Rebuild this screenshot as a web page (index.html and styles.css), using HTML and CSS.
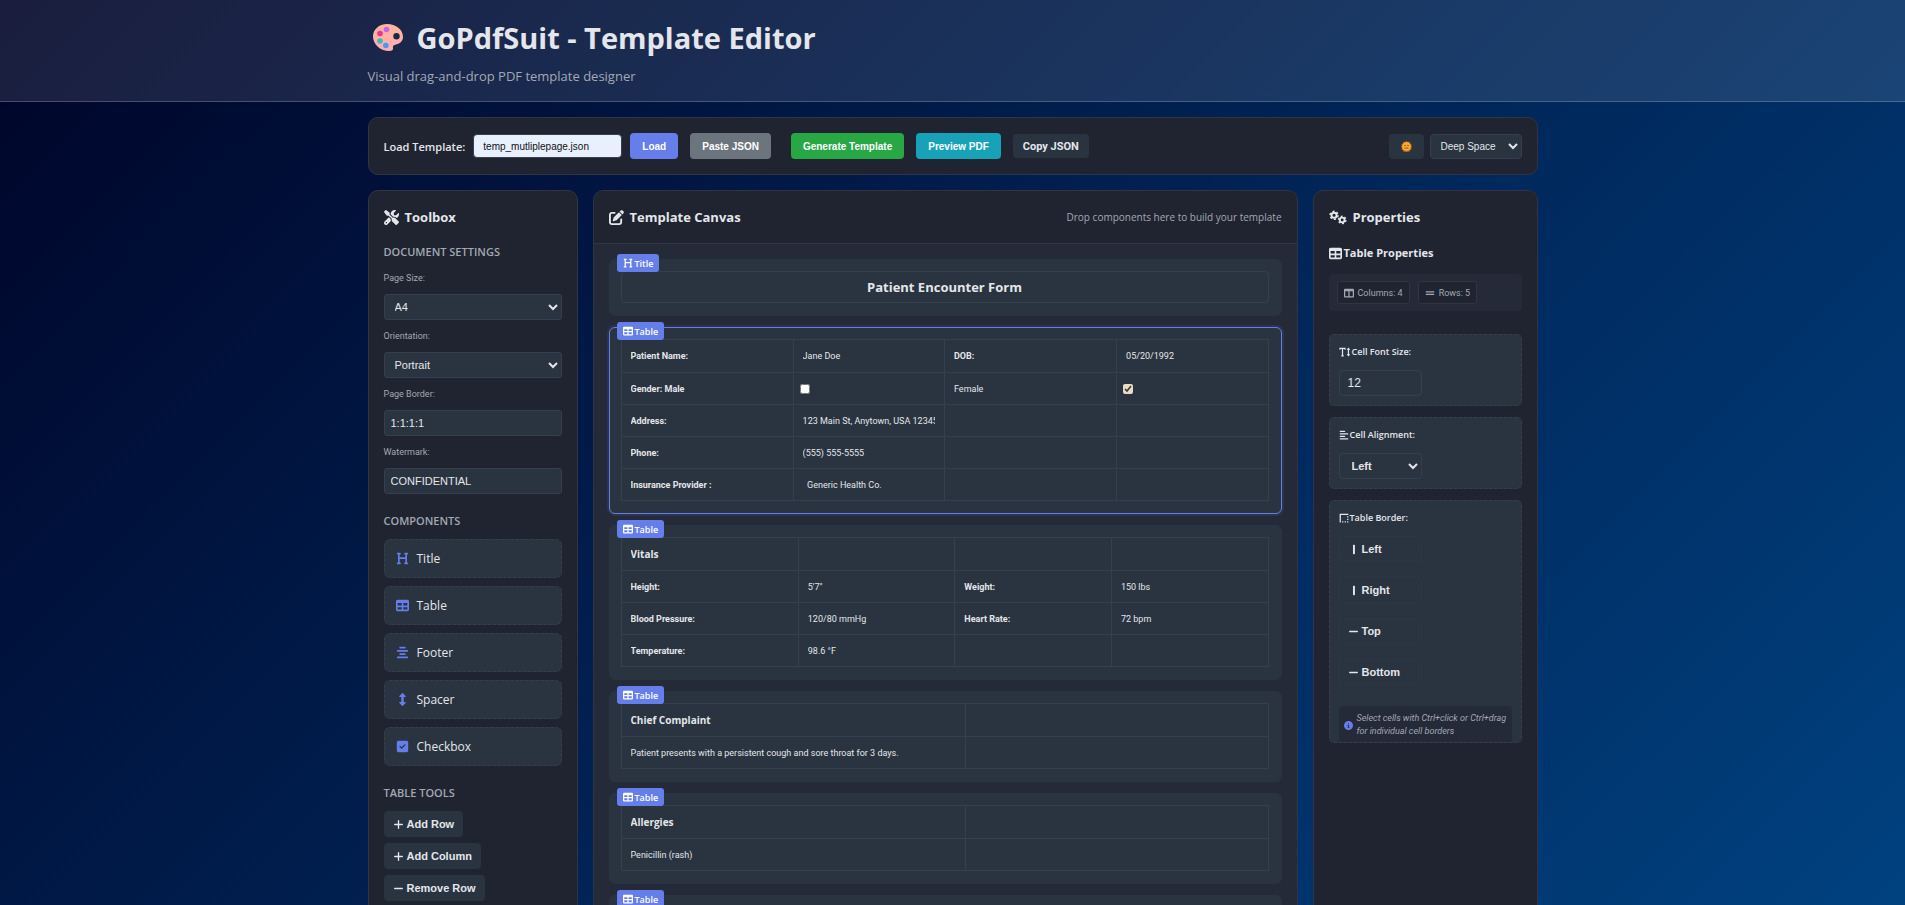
FILE: index.html
```html
<!DOCTYPE html>
<html lang="en">
<head>
<meta charset="utf-8">
<meta name="viewport" content="width=device-width, initial-scale=1">
<title>GoPdfSuit - Template Editor</title>
<link rel="stylesheet" href="styles.css">
</head>
<body>
<svg class="sprite" aria-hidden="true">
  <symbol id="i-table" viewBox="0 0 512 512"><path d="M64 256V160H224v96H64zm0 64H224v96H64V320zm224 96V320H448v96H288zM448 256H288V160H448v96zM64 32C28.700 32 0 60.700 0 96V416c0 35.300 28.700 64 64 64H448c35.300 0 64-28.700 64-64V96c0-35.300-28.700-64-64-64H64z"/></symbol>
  <symbol id="i-heading" viewBox="0 0 448 512"><path d="M0 64C0 46.300 14.300 32 32 32H80h48c17.700 0 32 14.300 32 32s-14.300 32-32 32H112V208H336V96H320c-17.700 0-32-14.300-32-32s14.300-32 32-32h48 48c17.700 0 32 14.300 32 32s-14.300 32-32 32H400V240 416h16c17.700 0 32 14.300 32 32s-14.300 32-32 32H368 320c-17.700 0-32-14.300-32-32s14.300-32 32-32h16V272H112V416h16c17.700 0 32 14.300 32 32s-14.300 32-32 32H80 32c-17.700 0-32-14.300-32-32s14.300-32 32-32H48V240 96H32C14.300 96 0 81.700 0 64z"/></symbol>
  <symbol id="i-center" viewBox="0 0 448 512"><path d="M352 64c0-17.700-14.300-32-32-32H128c-17.700 0-32 14.300-32 32s14.300 32 32 32H320c17.700 0 32-14.300 32-32zm96 128c0-17.700-14.300-32-32-32H32c-17.700 0-32 14.300-32 32s14.300 32 32 32H416c17.700 0 32-14.300 32-32zM0 448c0 17.700 14.300 32 32 32H416c17.700 0 32-14.300 32-32s-14.300-32-32-32H32c-17.700 0-32 14.300-32 32zM352 320c0-17.700-14.300-32-32-32H128c-17.700 0-32 14.300-32 32s14.300 32 32 32H320c17.700 0 32-14.300 32-32z"/></symbol>
  <symbol id="i-left" viewBox="0 0 448 512"><path d="M288 64c0 17.700-14.300 32-32 32H32C14.300 96 0 81.700 0 64S14.300 32 32 32H256c17.700 0 32 14.300 32 32zm0 256c0 17.700-14.300 32-32 32H32c-17.700 0-32-14.300-32-32s14.300-32 32-32H256c17.700 0 32 14.300 32 32zM0 192c0-17.700 14.300-32 32-32H416c17.700 0 32 14.300 32 32s-14.300 32-32 32H32c-17.700 0-32-14.300-32-32zM448 448c0 17.700-14.300 32-32 32H32c-17.700 0-32-14.300-32-32s14.300-32 32-32H416c17.700 0 32 14.300 32 32z"/></symbol>
  <symbol id="i-updown" viewBox="0 0 256 512"><path d="M145.600 7.700C141 2.800 134.700 0 128 0s-13 2.800-17.600 7.700l-104 112c-6.500 7-8.200 17.200-4.400 25.900S14.500 160 24 160H80V352H24c-9.500 0-18.200 5.700-22 14.400s-2.100 18.900 4.400 25.900l104 112c4.500 4.900 10.900 7.700 17.600 7.700s13-2.800 17.600-7.700l104-112c6.500-7 8.200-17.200 4.400-25.900s-12.500-14.400-22-14.400H176V160h56c9.500 0 18.200-5.700 22-14.400s2.100-18.900-4.400-25.900l-104-112z"/></symbol>
  <symbol id="i-check" viewBox="0 0 448 512"><path d="M64 32C28.700 32 0 60.700 0 96V416c0 35.300 28.700 64 64 64H384c35.300 0 64-28.700 64-64V96c0-35.300-28.700-64-64-64H64zM337 209L209 337c-9.400 9.400-24.600 9.400-33.900 0l-64-64c-9.400-9.400-9.400-24.600 0-33.900s24.600-9.400 33.900 0l47 47L303 175c9.400-9.400 24.600-9.400 33.900 0s9.400 24.600 0 33.900z"/></symbol>
  <symbol id="i-plus" viewBox="0 0 448 512"><path d="M256 80c0-17.700-14.300-32-32-32s-32 14.300-32 32V224H48c-17.700 0-32 14.300-32 32s14.300 32 32 32H192V432c0 17.700 14.300 32 32 32s32-14.300 32-32V288H400c17.700 0 32-14.300 32-32s-14.300-32-32-32H256V80z"/></symbol>
  <symbol id="i-minus" viewBox="0 0 448 512"><path d="M432 256c0 17.700-14.300 32-32 32H48c-17.700 0-32-14.300-32-32s14.300-32 32-32H400c17.700 0 32 14.300 32 32z"/></symbol>
  <symbol id="i-bar" viewBox="0 0 448 512"><rect x="200" y="40" width="90" height="432" rx="30"/></symbol>
  <symbol id="i-lines" viewBox="0 0 448 512"><path d="M32 160H416a32 32 0 0 1 0 64H32a32 32 0 0 1 0-64zM32 288H416a32 32 0 0 1 0 64H32a32 32 0 0 1 0-64z"/></symbol>
  <symbol id="i-columns" viewBox="0 0 512 512"><path d="M0 96C0 60.700 28.700 32 64 32H448c35.300 0 64 28.700 64 64V416c0 35.300-28.700 64-64 64H64c-35.300 0-64-28.700-64-64V96zm64 64V416H224V160H64zm384 0H288V416H448V160z"/></symbol>
  <symbol id="i-edit" viewBox="0 0 512 512"><path d="M471.600 21.700c-21.900-21.900-57.300-21.900-79.200 0L362.300 51.700l97.900 97.900 30.100-30.100c21.900-21.900 21.900-57.300 0-79.200L471.600 21.700zm-299.200 220c-6.100 6.100-10.800 13.600-13.500 21.900l-29.600 88.800c-2.900 8.600-.6 18.100 5.800 24.600s15.900 8.700 24.600 5.800l88.800-29.600c8.200-2.700 15.700-7.400 21.900-13.500L437.700 172.300 339.700 74.300 172.400 241.700zM96 64C43 64 0 107 0 160V416c0 53 43 96 96 96H352c53 0 96-43 96-96V320c0-17.700-14.300-32-32-32s-32 14.300-32 32v96c0 17.700-14.300 32-32 32H96c-17.700 0-32-14.300-32-32V160c0-17.700 14.300-32 32-32h96c17.700 0 32-14.300 32-32s-14.300-32-32-32H96z"/></symbol>
  <symbol id="i-tools" viewBox="0 0 512 512"><path d="M78.600 5C69.100-2.400 55.600-1.500 47 7L7 47c-8.500 8.500-9.400 22-2.100 31.600l80 104c4.500 5.900 11.600 9.400 19 9.400h54.100l109 109c-14.700 29-10 65.400 14.300 89.600l112 112c12.500 12.500 32.800 12.500 45.300 0l64-64c12.500-12.500 12.500-32.800 0-45.300l-112-112c-24.200-24.200-60.600-29-89.600-14.300l-109-109V104c0-7.500-3.500-14.500-9.400-19L78.600 5zM19.900 396.100C7.200 408.800 0 426.100 0 444.100C0 481.600 30.400 512 67.900 512c18 0 35.300-7.200 48-19.900L233.700 374.300c-7.800-20.900-9-43.600-3.600-65.100l-61.700-61.700L19.900 396.100zM512 144c0-10.500-1.100-20.700-3.200-30.500c-2.400-11.200-16.100-14.100-24.200-6l-63.900 63.900c-3 3-7.100 4.700-11.300 4.700H352c-8.800 0-16-7.200-16-16V102.600c0-4.200 1.700-8.300 4.700-11.300l63.900-63.900c8.100-8.100 5.200-21.800-6-24.200C388.700 1.100 378.500 0 368 0C288.500 0 224 64.500 224 144l0 .8 85.300 85.300c36-9.100 75.800 .5 104 28.700L429 274.500c49-23 83-72.800 83-130.500zM56 432a24 24 0 1 1 48 0 24 24 0 1 1 -48 0z"/></symbol>
  <symbol id="i-gears" viewBox="0 0 640 512"><g fill="none" stroke="currentColor"><circle cx="180" cy="176" r="92" stroke-width="70"/><circle cx="180" cy="176" r="142" stroke-width="50" stroke-dasharray="74 74.700"/><circle cx="468" cy="344" r="84" stroke-width="66"/><circle cx="468" cy="344" r="132" stroke-width="48" stroke-dasharray="69 69.200"/></g></symbol>
  <symbol id="i-height" viewBox="0 0 576 512"><path d="M0 32H320V144H260V96H192V416H224V480H96V416H128V96H60V144H0zM464 24L560 136H496V376H560L464 488L368 376H432V136H368z"/></symbol>
  <symbol id="i-border" viewBox="0 0 448 512"><path d="M0 32H448V96H64V480H0zM384 160h64v64h-64zM384 288h64v64h-64zM384 416h64v64h-64zM256 416h64v64h-64zM128 416h64v64h-64z"/></symbol>
  <symbol id="i-info" viewBox="0 0 512 512"><path d="M256 512A256 256 0 1 0 256 0a256 256 0 1 0 0 512zM216 336h24V272H216c-13.300 0-24-10.700-24-24s10.700-24 24-24h48c13.300 0 24 10.700 24 24v88h8c13.300 0 24 10.700 24 24s-10.700 24-24 24H216c-13.300 0-24-10.700-24-24s10.700-24 24-24zm40-208a32 32 0 1 1 0 64 32 32 0 1 1 0-64z"/></symbol>
</svg>

<header class="masthead">
  <div class="wrap">
    <h1 class="brand">
      <svg class="palette" viewBox="0 0 32 32" aria-hidden="true">
        <defs><linearGradient id="skin" x1="0" y1="0" x2="0" y2="1"><stop offset="0" stop-color="#ffb59a"/><stop offset="1" stop-color="#ffaeb4"/></linearGradient></defs>
        <path fill="url(#skin)" fill-rule="evenodd" d="M15 2C7 2 1 7.500 1 14.500C1 23 9 29 17 29C20 29 21.500 28 21 26C20.400 24 21.500 23 24 22.500C28.500 21.800 31 18.500 31 15C31 7.500 24 2 15 2zM24.500 11a3.200 3.200 0 1 1 0 6.400a3.200 3.200 0 1 1 0-6.400z"/>
        <circle cx="14.500" cy="7.500" r="2.800" fill="#c763f0"/><circle cx="8" cy="11.500" r="2.800" fill="#f4328c"/><circle cx="8" cy="19" r="2.800" fill="#36bdb4"/><circle cx="13.800" cy="23.500" r="2.800" fill="#4a95f8"/>
      </svg>
      <span>GoPdfSuit - Template Editor</span>
    </h1>
    <p class="tagline">Visual drag-and-drop PDF template designer</p>
  </div>
</header>

<main class="wrap page">
  <section class="panel toolbar" aria-label="Template actions">
    <label class="load-label" for="file">Load Template:</label>
    <input class="load-input" id="file" type="text" value="temp_mutliplepage.json">
    <button class="btn btn-load" type="button">Load</button>
    <button class="btn btn-paste" type="button">Paste JSON</button>
    <button class="btn btn-generate" type="button">Generate Template</button>
    <button class="btn btn-preview" type="button">Preview PDF</button>
    <button class="btn-copy" type="button">Copy JSON</button>
    <div class="theme">
      <button class="btn-theme" type="button" aria-label="Toggle theme">
        <svg class="face" viewBox="0 0 22 22" aria-hidden="true"><path fill="#d9701f" d="M11 0l2.500 2.200 3.300-.6 1 3.200 3.100 1.300-.7 3.300L22 11l-1.800 2.600.7 3.300-3.100 1.300-1 3.200-3.300-.6L11 22l-2.500-1.200-3.300.6-1-3.200-3.100-1.300.7-3.300L0 11l1.800-1.600-.7-3.300 3.100-1.300 1-3.200 3.300.6z"/><circle cx="11" cy="11" r="8.500" fill="#f5b02e"/><circle cx="8" cy="9" r="1.400" fill="#7a4310"/><circle cx="14" cy="9" r="1.400" fill="#7a4310"/><path d="M7 14h8" fill="none" stroke="#7a4310" stroke-width="1.600"/></svg>
      </button>
      <select class="theme-select" aria-label="Theme"><option>Deep Space</option></select>
    </div>
  </section>

  <div class="workspace">
    <aside class="panel side">
      <h2 class="heading"><svg class="ico-lg"><use href="#i-tools"/></svg>Toolbox</h2>
      <h3 class="group">Document Settings</h3>
      <label class="field-label" for="size">Page Size:</label>
      <select class="field" id="size"><option>A4</option></select>
      <label class="field-label" for="orient">Orientation:</label>
      <select class="field" id="orient"><option>Portrait</option></select>
      <label class="field-label" for="border">Page Border:</label>
      <input class="field" id="border" type="text" value="1:1:1:1">
      <label class="field-label" for="mark">Watermark:</label>
      <input class="field" id="mark" type="text" value="CONFIDENTIAL">
      <h3 class="group group-gap">Components</h3>
      <ul class="parts">
        <li class="part" draggable="true"><svg class="ico"><use href="#i-heading"/></svg>Title</li>
        <li class="part" draggable="true"><svg class="ico"><use href="#i-table"/></svg>Table</li>
        <li class="part" draggable="true"><svg class="ico"><use href="#i-center"/></svg>Footer</li>
        <li class="part" draggable="true"><svg class="ico"><use href="#i-updown"/></svg>Spacer</li>
        <li class="part" draggable="true"><svg class="ico"><use href="#i-check"/></svg>Checkbox</li>
      </ul>
      <h3 class="group group-gap">Table Tools</h3>
      <div class="tools">
        <button class="tool" type="button"><svg class="ico-sm"><use href="#i-plus"/></svg>Add Row</button>
        <button class="tool" type="button"><svg class="ico-sm"><use href="#i-plus"/></svg>Add Column</button>
        <button class="tool" type="button"><svg class="ico-sm"><use href="#i-minus"/></svg>Remove Row</button>
      </div>
    </aside>

    <section class="panel canvas">
      <div class="canvas-head">
        <h2 class="heading"><svg class="ico-lg"><use href="#i-edit"/></svg>Template Canvas</h2>
        <p class="hint">Drop components here to build your template</p>
      </div>
      <div class="canvas-body">
        <article class="card">
          <span class="badge"><svg class="ico-xs"><use href="#i-heading"/></svg>Title</span>
          <input class="doc-title" type="text" aria-label="Document title" value="Patient Encounter Form">
        </article>

        <article class="card card-active">
          <span class="badge"><svg class="ico-xs"><use href="#i-table"/></svg>Table</span>
          <table class="grid">
            <colgroup><col class="w-label"><col class="w-value"><col class="w-label"><col class="w-value"></colgroup>
            <tr><td><input class="cell strong" aria-label="Cell" value="Patient Name:"></td><td><input class="cell" aria-label="Cell" value="Jane Doe"></td><td><input class="cell strong" aria-label="Cell" value="DOB:"></td><td><input class="cell" aria-label="Cell" value="05/20/1992"></td></tr>
            <tr><td><input class="cell strong" aria-label="Cell" value="Gender: Male"></td><td><input class="tick" type="checkbox" aria-label="Male"></td><td><input class="cell" aria-label="Cell" value="Female"></td><td><input class="tick" type="checkbox" aria-label="Female" checked></td></tr>
            <tr><td><input class="cell strong" aria-label="Cell" value="Address:"></td><td><input class="cell" aria-label="Cell" value="123 Main St, Anytown, USA 12345"></td><td></td><td></td></tr>
            <tr><td><input class="cell strong" aria-label="Cell" value="Phone:"></td><td><input class="cell" aria-label="Cell" value="(555) 555-5555"></td><td></td><td></td></tr>
            <tr><td><input class="cell strong" aria-label="Cell" value="Insurance Provider :"></td><td><input class="cell" aria-label="Cell" value="  Generic Health Co."></td><td></td><td></td></tr>
          </table>
        </article>

        <article class="card">
          <span class="badge"><svg class="ico-xs"><use href="#i-table"/></svg>Table</span>
          <table class="grid">
            <colgroup><col class="w-vital"><col><col><col></colgroup>
            <tr><td><input class="cell title" aria-label="Cell" value="Vitals"></td><td></td><td></td><td></td></tr>
            <tr><td><input class="cell strong" aria-label="Cell" value="Height:"></td><td><input class="cell" aria-label="Cell" value="5'7&quot;"></td><td><input class="cell strong" aria-label="Cell" value="Weight:"></td><td><input class="cell" aria-label="Cell" value="150 lbs"></td></tr>
            <tr><td><input class="cell strong" aria-label="Cell" value="Blood Pressure:"></td><td><input class="cell" aria-label="Cell" value="120/80 mmHg"></td><td><input class="cell strong" aria-label="Cell" value="Heart Rate:"></td><td><input class="cell" aria-label="Cell" value="72 bpm"></td></tr>
            <tr><td><input class="cell strong" aria-label="Cell" value="Temperature:"></td><td><input class="cell" aria-label="Cell" value="98.6 °F"></td><td></td><td></td></tr>
          </table>
        </article>

        <article class="card">
          <span class="badge"><svg class="ico-xs"><use href="#i-table"/></svg>Table</span>
          <table class="grid">
            <colgroup><col class="w-wide"><col></colgroup>
            <tr><td><input class="cell title" aria-label="Cell" value="Chief Complaint"></td><td></td></tr>
            <tr><td><input class="cell" aria-label="Cell" value="Patient presents with a persistent cough and sore throat for 3 days."></td><td></td></tr>
          </table>
        </article>

        <article class="card">
          <span class="badge"><svg class="ico-xs"><use href="#i-table"/></svg>Table</span>
          <table class="grid">
            <colgroup><col class="w-wide"><col></colgroup>
            <tr><td><input class="cell title" aria-label="Cell" value="Allergies"></td><td></td></tr>
            <tr><td><input class="cell" aria-label="Cell" value="Penicillin (rash)"></td><td></td></tr>
          </table>
        </article>

        <article class="card">
          <span class="badge"><svg class="ico-xs"><use href="#i-table"/></svg>Table</span>
          <table class="grid"><tr><td></td><td></td></tr></table>
        </article>
      </div>
    </section>

    <aside class="panel side">
      <h2 class="heading"><svg class="ico-gears"><use href="#i-gears"/></svg>Properties</h2>
      <h3 class="subhead"><svg class="ico"><use href="#i-table"/></svg>Table Properties</h3>
      <div class="stats">
        <span class="stat"><svg class="ico-xs"><use href="#i-columns"/></svg>Columns: 4</span>
        <span class="stat"><svg class="ico-xs"><use href="#i-lines"/></svg>Rows: 5</span>
      </div>
      <div class="props">
        <div class="prop">
          <label class="prop-label" for="fs"><svg class="ico-height"><use href="#i-height"/></svg>Cell Font Size:</label>
          <input class="prop-field" id="fs" type="text" value="12">
        </div>
        <div class="prop">
          <label class="prop-label" for="al"><svg class="ico-xs"><use href="#i-left"/></svg>Cell Alignment:</label>
          <select class="prop-field" id="al"><option>Left</option></select>
        </div>
        <div class="prop prop-last">
          <span class="prop-label"><svg class="ico-xs"><use href="#i-border"/></svg>Table Border:</span>
          <div class="edges">
            <button class="edge" type="button"><svg class="ico-sm"><use href="#i-bar"/></svg>Left</button>
            <button class="edge" type="button"><svg class="ico-sm"><use href="#i-bar"/></svg>Right</button>
            <button class="edge" type="button"><svg class="ico-sm"><use href="#i-minus"/></svg>Top</button>
            <button class="edge" type="button"><svg class="ico-sm"><use href="#i-minus"/></svg>Bottom</button>
          </div>
          <p class="note"><svg class="ico-note"><use href="#i-info"/></svg><span>Select cells with Ctrl+click or Ctrl+drag for individual cell borders</span></p>
        </div>
      </div>
    </aside>
  </div>
</main>
</body>
</html>
```

FILE: styles.css
```css
:root {
  --panel: #1f2430;
  --body: #242a38;
  --item: #2a3440;
  --line: #373f4e;
  --edge: #2f3541;
  --text: #e4e6eb;
  --muted: #a3a8b3;
  --accent: #667eea;
  --sans: "Open Sans", "Noto Sans", sans-serif;
  --small: Roboto, "Open Sans", sans-serif;
  --ui: "Liberation Sans", Arial, sans-serif;
}

* { box-sizing: border-box; }

html, body { height: 100%; }

body {
  margin: 0;
  overflow: hidden;
  display: flex;
  flex-direction: column;
  font-family: var(--sans);
  color: var(--text);
  background: linear-gradient(135deg, #000428 0%, #004e92 100%) 0 0 / 100% 165vh no-repeat;
}

h1, h2, h3, p, ul { margin: 0; padding: 0; }
ul { list-style: none; }
svg { fill: currentColor; flex: none; }
button, input, select { font-family: var(--ui); color: inherit; margin: 0; }

.sprite { display: none; }
.ico { width: 13px; height: 13px; }
.ico-lg { width: 15px; height: 15px; }
.ico-gears { width: 18px; height: 15px; }
.ico-sm { width: 11px; height: 11px; }
.ico-xs { width: 10px; height: 10px; }
.ico-height { width: 12px; height: 10px; }
.ico-note { width: 9px; height: 9px; color: var(--accent); }

.wrap {
  width: 100%;
  max-width: 1170px;
  margin: 0 auto;
}

.masthead {
  flex: none;
  padding: 16px 0 15px;
  background: rgba(255, 255, 255, 0.1);
  border-bottom: 1px solid rgba(255, 255, 255, 0.2);
}
.brand {
  display: flex;
  align-items: center;
  gap: 13px;
  padding-left: 4px;
  font-size: 29px;
  line-height: 44px;
  font-weight: 700;
}
.palette { width: 32px; height: 32px; }
.tagline {
  padding-top: 6px;
  font-size: 13px;
  line-height: 20px;
  color: var(--muted);
}

.page {
  flex: 1;
  min-height: 0;
  display: flex;
  flex-direction: column;
  gap: 15px;
  padding-top: 15px;
}
.panel {
  background: var(--panel);
  border: 1px solid var(--edge);
  border-radius: 10px;
}

.toolbar {
  flex: none;
  display: flex;
  align-items: center;
  padding: 15px;
}
.load-label { font-size: 11px; font-weight: 600; margin-right: 8px; }
.load-input {
  width: 149px;
  height: 24px;
  margin-right: 8px;
  padding: 0 9px;
  font-size: 10px;
  color: #111;
  background: #e8f0fe;
  border: 1px solid var(--line);
  border-radius: 4px;
}
.btn {
  height: 26px;
  padding: 0 12px;
  font-size: 10px;
  font-weight: 700;
  color: #fff;
  border: 0;
  border-radius: 4px;
}
.btn-load { background: var(--accent); margin-right: 12px; }
.btn-paste { background: #6c757d; margin-right: 20px; }
.btn-generate { background: #28a745; margin-right: 12px; }
.btn-preview { background: #17a2b8; margin-right: 12px; }
.btn-copy, .btn-theme {
  height: 24px;
  padding: 0 10px;
  font-family: var(--small);
  font-size: 11px;
  font-weight: 700;
  background: var(--item);
  border: 0;
  border-radius: 4px;
}
.theme { margin-left: auto; display: flex; gap: 6px; }
.btn-theme { width: 35px; height: 25px; display: flex; align-items: center; justify-content: center; }
.face { width: 11px; height: 11px; }
.theme-select {
  width: 92px;
  height: 25px;
  padding: 0 0 0 6px;
  font-size: 10px;
  background: var(--item);
  border: 1px solid var(--line);
  border-radius: 4px;
}

.workspace {
  flex: 1;
  min-height: 0;
  display: grid;
  grid-template-columns: 210px minmax(0, 1fr) 225px;
  gap: 15px;
  margin-bottom: -12px;
}
.side { padding: 15px; overflow: hidden; }
.heading {
  display: flex;
  align-items: center;
  gap: 6px;
  font-size: 13px;
  line-height: 22px;
  font-weight: 700;
}
.group {
  margin-top: 13px;
  font-size: 11px;
  line-height: 21px;
  font-weight: 600;
  text-transform: uppercase;
  color: var(--muted);
}
.group-gap { margin-top: 16px; }
.field-label {
  display: block;
  margin-top: 8px;
  font-family: var(--small);
  font-size: 9px;
  line-height: 16px;
  color: var(--muted);
}
.field {
  display: block;
  width: 100%;
  height: 26px;
  margin-top: 8px;
  padding: 0 6px;
  font-size: 11px;
  background: var(--item);
  border: 1px solid var(--line);
  border-radius: 3px;
}
.parts { display: grid; gap: 8px; margin-top: 8px; }
.part {
  display: flex;
  align-items: center;
  gap: 8px;
  height: 39px;
  padding: 0 11px;
  font-size: 12px;
  background: var(--item);
  border: 1px dashed var(--line);
  border-radius: 6px;
}
.part .ico { color: var(--accent); }
.tools {
  display: flex;
  flex-direction: column;
  align-items: flex-start;
  gap: 6px;
  margin-top: 8px;
}
.tool {
  display: flex;
  align-items: center;
  gap: 3px;
  height: 26px;
  padding: 0 9px;
  font-size: 11px;
  font-weight: 700;
  background: var(--item);
  border: 0;
  border-radius: 4px;
}

.canvas {
  display: flex;
  flex-direction: column;
  min-height: 0;
  overflow: hidden;
  background: var(--body);
}
.canvas-head {
  flex: none;
  display: flex;
  align-items: center;
  justify-content: space-between;
  padding: 15px;
  background: var(--panel);
  border-bottom: 1px solid var(--edge);
}
.hint { font-size: 10px; color: var(--muted); }
.canvas-body {
  flex: 1;
  min-height: 0;
  overflow: hidden;
  display: flex;
  flex-direction: column;
  gap: 11px;
  padding: 15px;
}
.card {
  flex: none;
  position: relative;
  padding: 11px 12px 12px 11px;
  background: var(--item);
  border: 1px solid var(--item);
  border-radius: 6px;
}
.card-active {
  border-color: var(--accent);
  box-shadow: 0 0 0 2px rgba(102, 126, 234, 0.12);
}
.badge {
  position: absolute;
  top: -6px;
  left: 7px;
  display: flex;
  align-items: center;
  gap: 2px;
  height: 18px;
  padding: 0 6px;
  font-size: 9px;
  font-weight: 600;
  color: #fff;
  background: var(--accent);
  border-radius: 3px;
}
.doc-title {
  display: block;
  width: 100%;
  height: 32px;
  font-family: var(--sans);
  font-size: 13px;
  font-weight: 700;
  text-align: center;
  background: transparent;
  border: 1px solid var(--line);
  border-radius: 4px;
}
.grid {
  width: 100%;
  table-layout: fixed;
  border-collapse: collapse;
}
.grid td {
  height: 32px;
  padding: 0 3px;
  border: 1px solid var(--line);
}
.grid tr:first-child td { height: 33px; }
.w-label { width: 26.6%; }
.w-value { width: 23.4%; }
.w-vital { width: 27.4%; }
.w-wide { width: 53.2%; }
.cell {
  display: block;
  width: 100%;
  height: 24px;
  padding: 0 6px;
  font-family: var(--small);
  font-size: 9px;
  background: transparent;
  border: 0;
}
.strong { font-weight: 700; }
.title { font-family: var(--sans); font-size: 10px; font-weight: 700; }
.tick {
  display: block;
  width: 10px;
  height: 10px;
  margin-left: 3px;
  accent-color: #e8dcc4;
}

.subhead {
  display: flex;
  align-items: center;
  gap: 2px;
  margin-top: 15px;
  font-size: 11px;
  line-height: 20px;
  font-weight: 700;
}
.stats {
  display: flex;
  gap: 8px;
  margin-top: 11px;
  padding: 7px 8px;
  background: var(--body);
  border-radius: 4px;
}
.stat {
  display: flex;
  align-items: center;
  gap: 4px;
  height: 23px;
  padding: 0 6px;
  font-family: var(--small);
  font-size: 9px;
  color: var(--muted);
  background: var(--panel);
  border: 1px solid var(--edge);
  border-radius: 3px;
}
.props { display: grid; gap: 11px; margin-top: 23px; }
.prop {
  padding: 9px;
  background: var(--item);
  border: 1px dashed var(--line);
  border-radius: 5px;
}
.prop-label {
  display: flex;
  align-items: center;
  gap: 1px;
  font-size: 9px;
  line-height: 16px;
  font-weight: 600;
}
.prop-field {
  display: block;
  width: 83px;
  height: 26px;
  margin-top: 10px;
  padding: 0 8px;
  font-size: 12px;
  background: var(--item);
  border: 1px solid var(--line);
  border-radius: 4px;
}
select.prop-field { font-size: 11px; font-weight: 700; }
.prop-last { padding-bottom: 0; overflow: hidden; }
.edges { display: grid; gap: 15px; margin-top: 10px; }
.edge {
  display: flex;
  align-items: center;
  gap: 3px;
  width: 83px;
  height: 26px;
  padding: 0 8px;
  font-size: 11px;
  font-weight: 700;
  background: transparent;
  border: 1px solid #2d3642;
  border-radius: 4px;
}
.note {
  display: flex;
  align-items: center;
  gap: 4px;
  margin-top: 21px;
  padding: 6px 5px 4px;
  font-family: var(--small);
  font-size: 9px;
  line-height: 13px;
  font-style: italic;
  color: var(--muted);
  background: var(--body);
  border-radius: 4px 4px 0 0;
}
```
